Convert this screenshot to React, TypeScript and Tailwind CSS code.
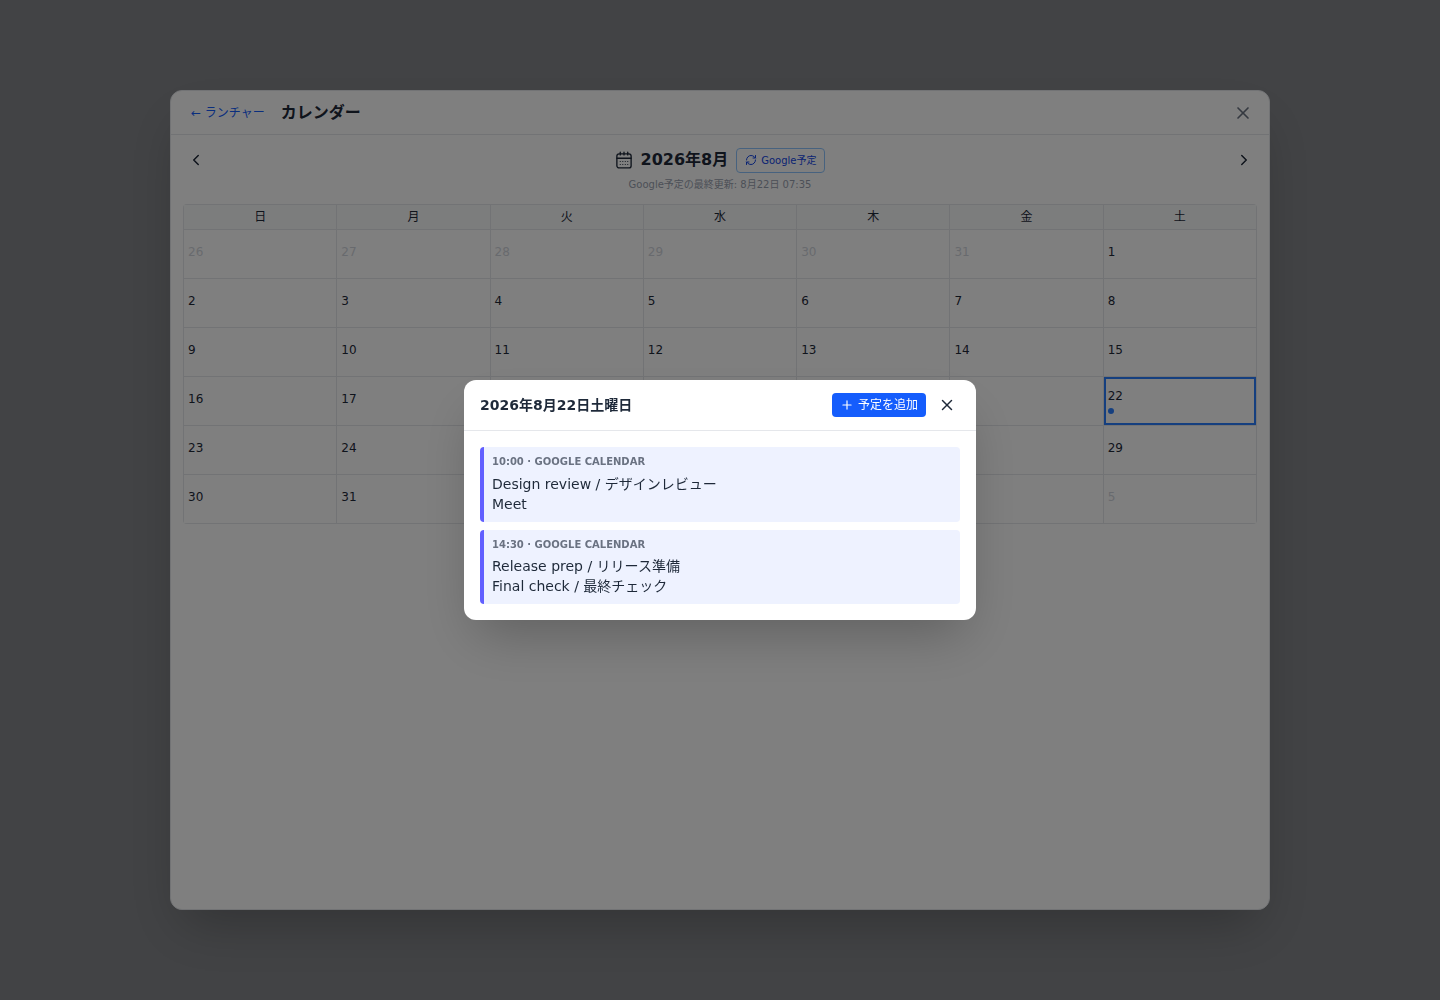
import React, { useState } from "react";
import { ChevronLeft, ChevronRight, Plus, RefreshCw, X } from "lucide-react";

interface CalendarDay {
  date: number;
  inMonth: boolean;
  events: number;
}

interface CalendarEvent {
  time: string;
  source: string;
  lines: string[];
}

const WEEKDAYS = ["日", "月", "火", "水", "木", "金", "土"];

const EVENTS: CalendarEvent[] = [
  {
    time: "10:00",
    source: "Google Calendar",
    lines: ["Design review / デザインレビュー", "Meet"],
  },
  {
    time: "14:30",
    source: "Google Calendar",
    lines: ["Release prep / リリース準備", "Final check / 最終チェック"],
  },
];

const SELECTED = 22;

const buildWeeks = (): CalendarDay[][] => {
  const weeks: CalendarDay[][] = [];
  for (let w = 0; w < 6; w++) {
    const week: CalendarDay[] = [];
    for (let d = 0; d < 7; d++) {
      const day = new Date(2026, 6, 26 + w * 7 + d);
      const inMonth = day.getMonth() === 7;
      week.push({
        date: day.getDate(),
        inMonth,
        events: inMonth && day.getDate() === SELECTED ? 1 : 0,
      });
    }
    weeks.push(week);
  }
  return weeks;
};

const CalendarIcon: React.FC = () => (
  <svg
    width="18"
    height="18"
    viewBox="0 0 24 24"
    fill="none"
    stroke="currentColor"
    strokeWidth="1.8"
    strokeLinecap="round"
    strokeLinejoin="round"
    aria-hidden="true"
  >
    <rect x="2.5" y="3.8" width="19" height="18.7" rx="3" />
    <path d="M2.5 9.7h19M7 1.5v3.7M12 1.5v3.7M17 1.5v3.7" />
    <path
      strokeWidth="1.6"
      d="M7 14h.01M10.4 14h.01M13.7 14h.01M17 14h.01M7 18h.01M10.4 18h.01M13.7 18h.01M17 18h.01"
    />
  </svg>
);

const DayCell: React.FC<{ day: CalendarDay; onSelect: () => void }> = ({ day, onSelect }) => {
  const selected = day.inMonth && day.date === SELECTED;
  return (
    <td className="bg-white p-0">
      <button
        type="button"
        onClick={onSelect}
        className={`flex h-12 w-full flex-col items-start justify-center px-1 text-xs
          ${selected ? "ring-2 ring-inset ring-blue-500" : ""}
          ${day.inMonth ? "text-gray-800" : "text-gray-300"}`}
      >
        <span>{day.date}</span>
        <span className="mt-1 flex gap-1">
          {day.events > 0 && <span className="size-1.5 rounded-full bg-blue-500" />}
        </span>
      </button>
    </td>
  );
};

const App: React.FC = () => {
  const [open, setOpen] = useState(true);
  const weeks = buildWeeks();

  return (
    <div className="flex min-h-screen items-center justify-center bg-[#85878b] font-['DejaVu_Sans','Noto_Sans_CJK_JP',sans-serif] text-gray-800">
      <main className="flex h-[82vh] w-full max-w-[1100px] flex-col overflow-hidden rounded-xl border border-gray-200 bg-white shadow-2xl">
        <header className="flex h-11 shrink-0 items-center gap-4 border-b border-gray-200 pr-4 pl-5">
          <a href="#launcher" className="text-xs text-blue-600">
            ← ランチャー
          </a>
          <h1 className="text-base font-bold">カレンダー</h1>
          <button type="button" aria-label="閉じる" className="ml-auto text-gray-500">
            <X size={20} />
          </button>
        </header>

        <section className="p-3">
          <div className="flex items-center justify-between">
            <button type="button" aria-label="前の月" className="p-1">
              <ChevronLeft size={18} />
            </button>
            <div className="flex items-center gap-2">
              <CalendarIcon />
              <h2 className="text-base font-bold">2026年8月</h2>
              <button
                type="button"
                className="flex items-center gap-1 rounded border border-blue-300 px-2 py-1 text-[10px] leading-[15px] text-blue-700"
              >
                <RefreshCw size={12} />
                Google予定
              </button>
            </div>
            <button type="button" aria-label="次の月" className="p-1">
              <ChevronRight size={18} />
            </button>
          </div>
          <p className="mt-1 mb-3 text-center text-[10px] leading-[15px] text-gray-400">
            Google予定の最終更新: 8月22日 07:35
          </p>

          <table className="w-full table-fixed border-separate border-spacing-px overflow-hidden rounded bg-gray-200 text-xs">
            <thead>
              <tr>
                {WEEKDAYS.map((name) => (
                  <th key={name} className="h-6 bg-gray-50 p-0 font-normal">
                    {name}
                  </th>
                ))}
              </tr>
            </thead>
            <tbody>
              {weeks.map((week, i) => (
                <tr key={i}>
                  {week.map((day) => (
                    <DayCell key={day.date} day={day} onSelect={() => setOpen(true)} />
                  ))}
                </tr>
              ))}
            </tbody>
          </table>
        </section>
      </main>

      {open && (
        <div className="fixed inset-0 flex items-center justify-center bg-black/50 p-4">
          <div
            role="dialog"
            aria-labelledby="day-title"
            className="w-full max-w-lg overflow-hidden rounded-xl bg-white shadow-2xl"
          >
            <div className="flex items-center gap-2 border-b border-gray-200 px-4 py-3">
              <h3 id="day-title" className="text-sm font-bold">
                2026年8月22日土曜日
              </h3>
              <button
                type="button"
                className="ml-auto flex items-center gap-1 rounded-sm bg-blue-600 px-2 py-1 text-xs text-white"
              >
                <Plus size={14} />
                予定を追加
              </button>
              <button type="button" aria-label="閉じる" onClick={() => setOpen(false)} className="p-1">
                <X size={18} />
              </button>
            </div>
            <ul className="flex flex-col gap-2 p-4">
              {EVENTS.map((event) => (
                <li
                  key={event.time}
                  className="rounded-sm border-l-4 border-indigo-500 bg-indigo-50 p-2 text-sm"
                >
                  <p className="mb-1 text-[10px] font-bold text-gray-500 uppercase">
                    {event.time} · {event.source}
                  </p>
                  {event.lines.map((line) => (
                    <p key={line}>{line}</p>
                  ))}
                </li>
              ))}
            </ul>
          </div>
        </div>
      )}
    </div>
  );
};

export default App;
